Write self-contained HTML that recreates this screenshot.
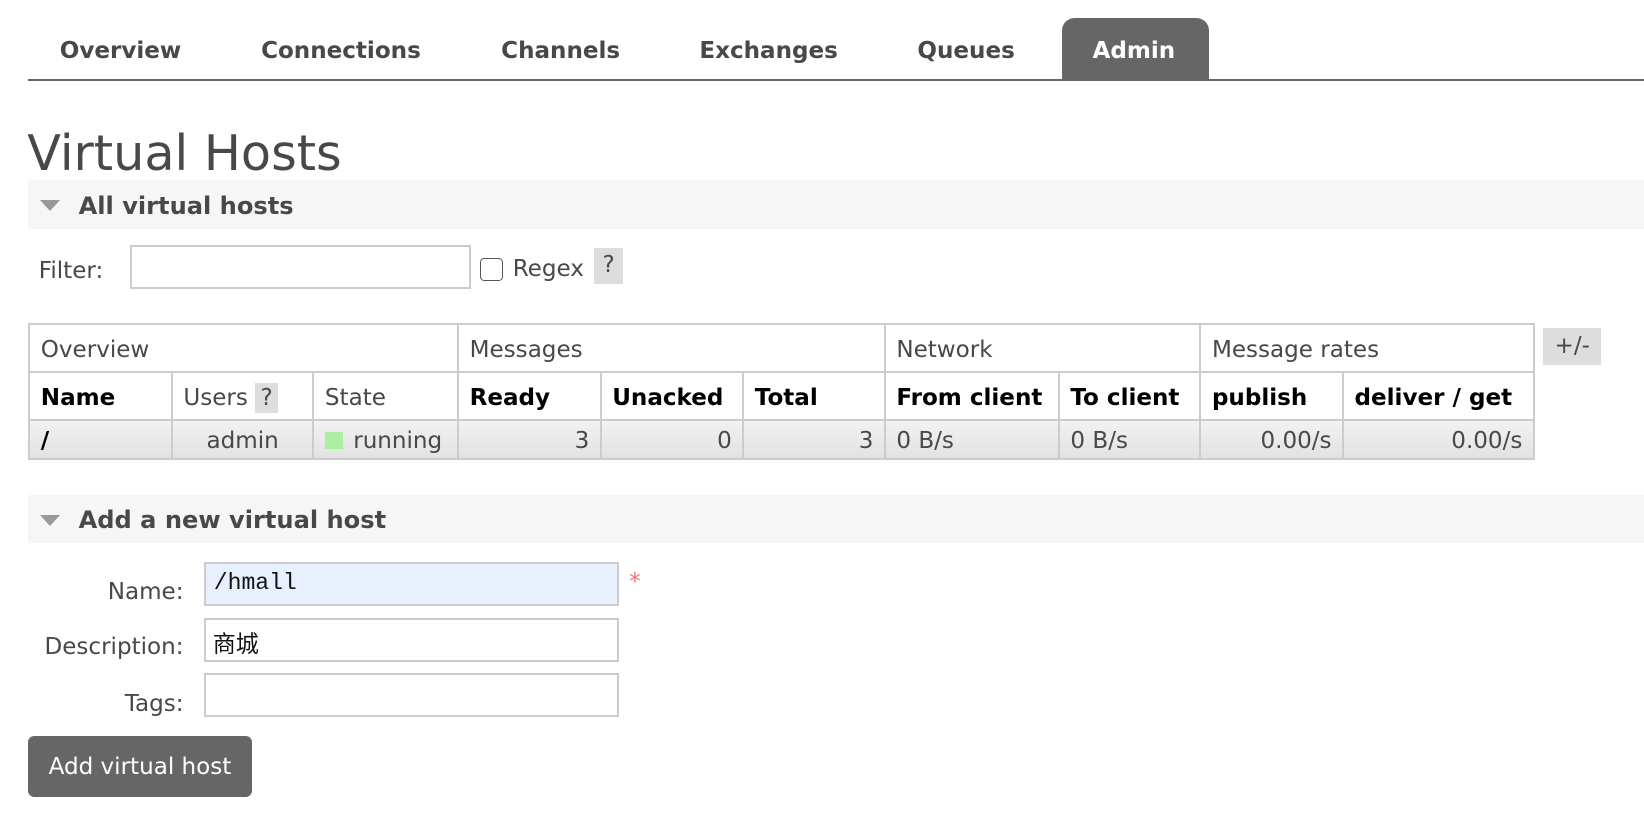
<!DOCTYPE html>
<html><head><meta charset="utf-8"><style>
html,body{margin:0;padding:0;background:#fff;overflow:hidden}
body{width:1644px;height:822px}
#w{zoom:1.0485;width:1568px;height:784px;position:relative;font-family:"DejaVu Sans","Noto Sans CJK SC",sans-serif;color:#484848;font-size:22px}
.a{position:absolute;white-space:nowrap}
.tab{position:absolute;top:36px;font-weight:bold;font-size:22px}
.bar{position:absolute;left:27px;right:0;height:46px;background:#f6f6f6}
.tri{position:absolute;left:11px;top:19px;width:0;height:0;border-left:10px solid transparent;border-right:10px solid transparent;border-top:11px solid #999}
.bar span{position:absolute;left:48px;top:11px;font-weight:bold;font-size:23px}
.inp{position:absolute;border:2px solid #ccc;box-sizing:border-box;background:#fff}
table{position:absolute;left:27px;top:308px;border-collapse:collapse}
td{border:2px solid #ccc;padding:3px 10px 0;height:46px;box-sizing:border-box;font-size:22px;white-space:nowrap}
tr.d td{height:37px;background:linear-gradient(#f2f2f2,#e2e2e2)}
.r{text-align:right}.c{text-align:center}
b{font-weight:bold;color:#000}
</style></head><body><div id="w">
<div class="a" style="left:27px;right:0;top:75px;height:2px;background:#666"></div>
<div class="a" style="left:1013px;top:17px;width:140px;height:59px;background:#666;border-radius:12px 12px 0 0"></div>
<div class="tab" style="left:57px">Overview</div>
<div class="tab" style="left:249px">Connections</div>
<div class="tab" style="left:478px">Channels</div>
<div class="tab" style="left:667px">Exchanges</div>
<div class="tab" style="left:875px">Queues</div>
<div class="tab" style="left:1042px;color:#fff">Admin</div>
<div class="a" style="left:26px;top:118px;font-size:47px">Virtual Hosts</div>
<div class="bar" style="top:172px"><div class="tri"></div><span>All virtual hosts</span></div>
<div class="a" style="left:37px;top:246px">Filter:</div>
<div class="inp" style="left:124px;top:234px;width:325px;height:42px"></div>
<div class="a" style="left:458px;top:246px;width:22px;height:22px;border:1.5px solid #555;border-radius:4px;box-sizing:border-box"></div>
<div class="a" style="left:489px;top:244px">Regex</div>
<div class="a" style="left:567px;top:237px;width:27px;height:34px;background:#ddd;text-align:center;line-height:34px">?</div>
<table>
<tr><td colspan="3" style="width:409px">Overview</td><td colspan="3">Messages</td><td colspan="2">Network</td><td colspan="2">Message rates</td></tr>
<tr class="h"><td style="width:136px"><b>Name</b></td><td style="width:135px">Users <span style="background:#ddd;padding:2px 5px">?</span></td><td style="width:138px">State</td><td style="width:136px"><b>Ready</b></td><td style="width:136px"><b>Unacked</b></td><td style="width:135px"><b>Total</b></td><td style="width:166px"><b>From client</b></td><td style="width:135px"><b>To client</b></td><td style="width:136px"><b>publish</b></td><td style="width:182px"><b>deliver / get</b></td></tr>
<tr class="d"><td><b>/</b></td><td class="c">admin</td><td><span style="display:inline-block;width:17px;height:17px;background:#aaf0a0;vertical-align:-1px;margin-right:10px"></span>running</td><td class="r">3</td><td class="r">0</td><td class="r">3</td><td>0 B/s</td><td>0 B/s</td><td class="r">0.00/s</td><td class="r">0.00/s</td></tr>
</table>
<div class="a" style="left:1472px;top:313px;width:55px;height:35px;background:#ddd;text-align:center;line-height:35px">+/-</div>
<div class="bar" style="top:472px"><div class="tri"></div><span>Add a new virtual host</span></div>
<div class="a" style="right:1393px;top:552px">Name:</div>
<div class="inp" style="left:195px;top:536px;width:395px;height:42px;background:#e8f0fe;font-family:'Liberation Mono',monospace;padding:6px 7px;color:#111">/hmall</div>
<div class="a" style="left:600px;top:543px;color:#e77">*</div>
<div class="a" style="right:1393px;top:605px">Description:</div>
<div class="inp" style="left:195px;top:589px;width:395px;height:42px;padding:5px 6px;color:#111">商城</div>
<div class="a" style="right:1393px;top:659px">Tags:</div>
<div class="inp" style="left:195px;top:642px;width:395px;height:42px"></div>
<div class="a" style="left:27px;top:702px;width:213px;height:58px;background:#666;border-radius:6px;color:#fff;text-align:center;line-height:60px">Add virtual host</div>
</div></body></html>
